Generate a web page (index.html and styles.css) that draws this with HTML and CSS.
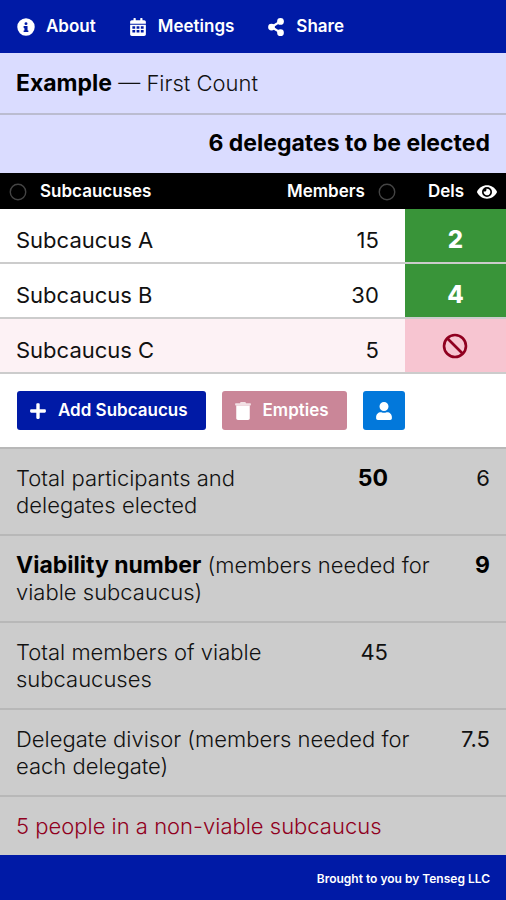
FILE: index.html
```html
<!DOCTYPE html>
<html lang="en">
<head>
	<meta charset="utf-8">
	<meta name="viewport" content="width=device-width, initial-scale=1.0">
	<title>Subcaucus Calculator</title>
	<link rel="stylesheet" href="styles.css">
</head>
<body>
	<nav class="menu">
		<a href="#about">
			<svg class="icon" viewBox="0 0 512 512"><path fill-rule="evenodd" d="M256 8a248 248 0 1 0 0 496a248 248 0 1 0 0-496zM256 118a42 42 0 1 1 0 84a42 42 0 1 1 0-84zM204 224h84c7 0 12 5 12 12v116h12c7 0 12 5 12 12v24c0 7-5 12-12 12H200c-7 0-12-5-12-12v-24c0-7 5-12 12-12h12v-64h-12c-7 0-12-5-12-12v-40c0-7 5-12 16-12z"/></svg>
			About
		</a>
		<a href="#meetings">
			<svg class="icon" viewBox="0 0 448 512"><path fill-rule="evenodd" d="M0 464c0 26 22 48 48 48h352c26 0 48-22 48-48V192H0zM64 236h80v68H64zM184 236h80v68h-80zM304 236h80v68h-80zM64 344h80v68H64zM184 344h80v68h-80zM304 344h80v68h-80zM0 160h448v-48c0-26-22-48-48-48h-48V16c0-9-7-16-16-16h-32c-9 0-16 7-16 16v48H160V16c0-9-7-16-16-16h-32c-9 0-16 7-16 16v48H48c-26 0-48 22-48 48z"/></svg>
			Meetings
		</a>
		<a href="#share">
			<svg class="icon" viewBox="0 0 448 512"><path d="M96 256L352 96M96 256L352 416" fill="none" stroke="currentColor" stroke-width="64"/><circle cx="96" cy="256" r="96"/><circle cx="352" cy="96" r="96"/><circle cx="352" cy="416" r="96"/></svg>
			Share
		</a>
	</nav>

	<header class="meeting">
		<h1><strong>Example</strong> — First Count</h1>
		<p class="allowed">6 delegates to be elected</p>
	</header>

	<main>
		<table class="subcaucuses">
			<thead>
				<tr>
					<th class="name">
						<button type="button"><svg class="icon ring" viewBox="0 0 512 512"><circle cx="256" cy="256" r="220"/></svg>Subcaucuses</button>
					</th>
					<th class="members">
						<button type="button">Members<svg class="icon ring" viewBox="0 0 512 512"><circle cx="256" cy="256" r="220"/></svg></button>
					</th>
					<th class="dels">
						<button type="button">Dels<svg class="icon eye" viewBox="0 0 576 512"><path fill-rule="evenodd" d="M572 241C518 135 410 64 288 64S58 135 4 241a32 32 0 0 0 0 30c54 106 162 177 284 177s230-71 284-177a32 32 0 0 0 0-30zM288 400a144 144 0 1 1 0-288a144 144 0 1 1 0 288zM288 160a95 95 0 0 0-25 4a48 48 0 0 1-67 67a96 96 0 1 0 92-71z"/></svg></button>
					</th>
				</tr>
			</thead>
			<tbody>
				<tr>
					<td class="name">Subcaucus A</td>
					<td class="members">15</td>
					<td class="dels">2</td>
				</tr>
				<tr>
					<td class="name">Subcaucus B</td>
					<td class="members">30</td>
					<td class="dels">4</td>
				</tr>
				<tr class="not-viable">
					<td class="name">Subcaucus C</td>
					<td class="members">5</td>
					<td class="dels"><svg class="ban" viewBox="0 0 512 512" role="img" aria-label="No delegates"><circle cx="256" cy="256" r="216"/><path d="M104 104L408 408"/></svg></td>
				</tr>
			</tbody>
		</table>

		<div class="actions">
			<button type="button" class="add">
				<svg class="icon" viewBox="0 0 448 512"><path d="M416 208H272V64c0-18-14-32-32-32h-32c-18 0-32 14-32 32v144H32c-18 0-32 14-32 32v32c0 18 14 32 32 32h144v144c0 18 14 32 32 32h32c18 0 32-14 32-32V304h144c18 0 32-14 32-32v-32c0-18-14-32-32-32z"/></svg>
				Add Subcaucus
			</button>
			<button type="button" class="empties">
				<svg class="icon" viewBox="0 0 448 512"><path d="M432 32H312l-9-19A24 24 0 0 0 281 0H166a24 24 0 0 0-21 13l-9 19H16C7 32 0 39 0 48v32c0 9 7 16 16 16h416c9 0 16-7 16-16V48c0-9-7-16-16-16z" opacity=".75"/><path d="M32 96h384v368c0 27-21 48-48 48H80c-27 0-48-21-48-48z"/></svg>
				Empties
			</button>
			<button type="button" class="person" aria-label="People">
				<svg class="icon" viewBox="0 0 448 512"><path d="M224 256a128 128 0 1 0 0-256a128 128 0 1 0 0 256zM314 288h-17a174 174 0 0 1-146 0h-17C60 288 0 348 0 422v42c0 27 21 48 48 48h352c27 0 48-21 48-48v-42c0-74-60-134-134-134z"/></svg>
			</button>
		</div>

		<table class="summary">
			<colgroup>
				<col>
				<col class="col-members">
				<col class="col-dels">
			</colgroup>
			<tbody>
				<tr>
					<th>Total participants and delegates elected</th>
					<td class="members"><strong>50</strong></td>
					<td>6</td>
				</tr>
				<tr>
					<th colspan="2"><strong>Viability number</strong> (members needed for viable subcaucus)</th>
					<td><strong>9</strong></td>
				</tr>
				<tr>
					<th>Total members of viable subcaucuses</th>
					<td class="members">45</td>
					<td></td>
				</tr>
				<tr>
					<th colspan="2">Delegate divisor (members needed for each delegate)</th>
					<td>7.5</td>
				</tr>
				<tr class="warning">
					<th colspan="3">5 people in a non-viable subcaucus</th>
				</tr>
			</tbody>
		</table>
	</main>

	<footer>Brought to you by <a href="#tenseg">Tenseg LLC</a></footer>
</body>
</html>
```
FILE: styles.css
```css
* {
	box-sizing: border-box;
}

body {
	margin: 0;
	min-height: 100vh;
	display: flex;
	flex-direction: column;
	background: #001aa6;
	color: #111;
	font: 300 22px/27px Inter, "Liberation Sans", sans-serif;
}

strong {
	font-size: 23px;
	font-weight: 700;
	line-height: 22px;
	color: #000;
}

.icon {
	height: 18px;
	width: 18px;
	fill: currentColor;
	flex: none;
}

/* top menu */
.menu {
	display: flex;
	gap: 33px;
	padding: 13px 17px;
	background: #001aa6;
}

.menu a {
	display: flex;
	align-items: center;
	gap: 11px;
	color: #fff;
	font-size: 17px;
	font-weight: 600;
	text-decoration: none;
}

/* meeting name and delegates allowed */
.meeting {
	background: #dadcff;
}

.meeting h1,
.meeting p {
	margin: 0;
	padding: 16px;
	font-size: 22px;
	font-weight: 300;
}

.meeting h1 {
	padding-top: 17px;
	border-bottom: 2px solid #bbbcd0;
}

.meeting .allowed {
	padding-top: 15px;
	font-size: 23px;
	font-weight: 700;
	text-align: right;
	color: #000;
}

main {
	background: #fff;
}

table {
	width: 100%;
	border-spacing: 0;
	table-layout: fixed;
}

/* list of subcaucuses */
.subcaucuses th {
	height: 36px;
	padding: 0;
	background: #000;
	text-align: left;
}

.subcaucuses th button {
	display: inline-flex;
	align-items: center;
	gap: 13px;
	padding: 0 9px;
	border: 0;
	background: none;
	color: #fff;
	font: 600 17px/27px Inter, "Liberation Sans", sans-serif;
	vertical-align: middle;
}

.subcaucuses th.members {
	width: 32%;
	text-align: right;
}

.subcaucuses th.dels {
	width: 20%;
	text-align: right;
}

.subcaucuses .ring {
	fill: none;
	stroke: #444;
	stroke-width: 40;
}

.subcaucuses .eye {
	width: 20px;
}

.subcaucuses td {
	padding: 18px 16px 8px;
	border-bottom: 2px solid #ccc;
	font-weight: 400;
}

.subcaucuses td.members {
	padding-right: 26px;
	text-align: right;
}

.subcaucuses td.dels {
	padding: 17px 0 9px;
	background: #399439;
	background-clip: padding-box;
	color: #fff;
	font-size: 24px;
	font-weight: 800;
	text-align: center;
}

.subcaucuses .not-viable td {
	background: #fdf2f5;
}

.subcaucuses .not-viable td.dels {
	padding: 0;
	background: #f7c5d1;
	color: #900020;
}

.ban {
	display: block;
	width: 26px;
	height: 26px;
	margin: 0 auto;
	fill: none;
	stroke: currentColor;
	stroke-width: 52;
}

/* buttons under the list */
.actions {
	display: flex;
	gap: 16px;
	padding: 17px;
}

.actions button {
	display: flex;
	align-items: center;
	gap: 11px;
	height: 39px;
	padding: 0 18px 0 12px;
	border: 0;
	border-radius: 3px;
	color: #fff;
	font: 600 17px/27px Inter, "Liberation Sans", sans-serif;
}

.actions .add {
	background: #001aa6;
}

.actions .empties {
	background: #ca8698;
}

.actions .person {
	padding: 0 12px;
	background: #0278db;
}

/* totals */
.summary {
	background: #ccc;
}

.col-members {
	width: 130px;
}

.col-dels {
	width: 72px;
}

.summary th,
.summary td {
	padding: 16px 0 15px 16px;
	border-top: 2px solid #b8b8b8;
	font-weight: 300;
	text-align: left;
	vertical-align: top;
}

.summary td {
	padding-right: 16px;
	padding-left: 0;
	font-weight: 400;
	text-align: right;
}

.summary td.members {
	padding-right: 46px;
}

.summary .warning th {
	color: #900020;
}

footer {
	padding: 10px 16px;
	color: #fff;
	font-size: 12px;
	font-weight: 600;
	text-align: right;
}

footer a {
	color: inherit;
	text-decoration: none;
}
```
